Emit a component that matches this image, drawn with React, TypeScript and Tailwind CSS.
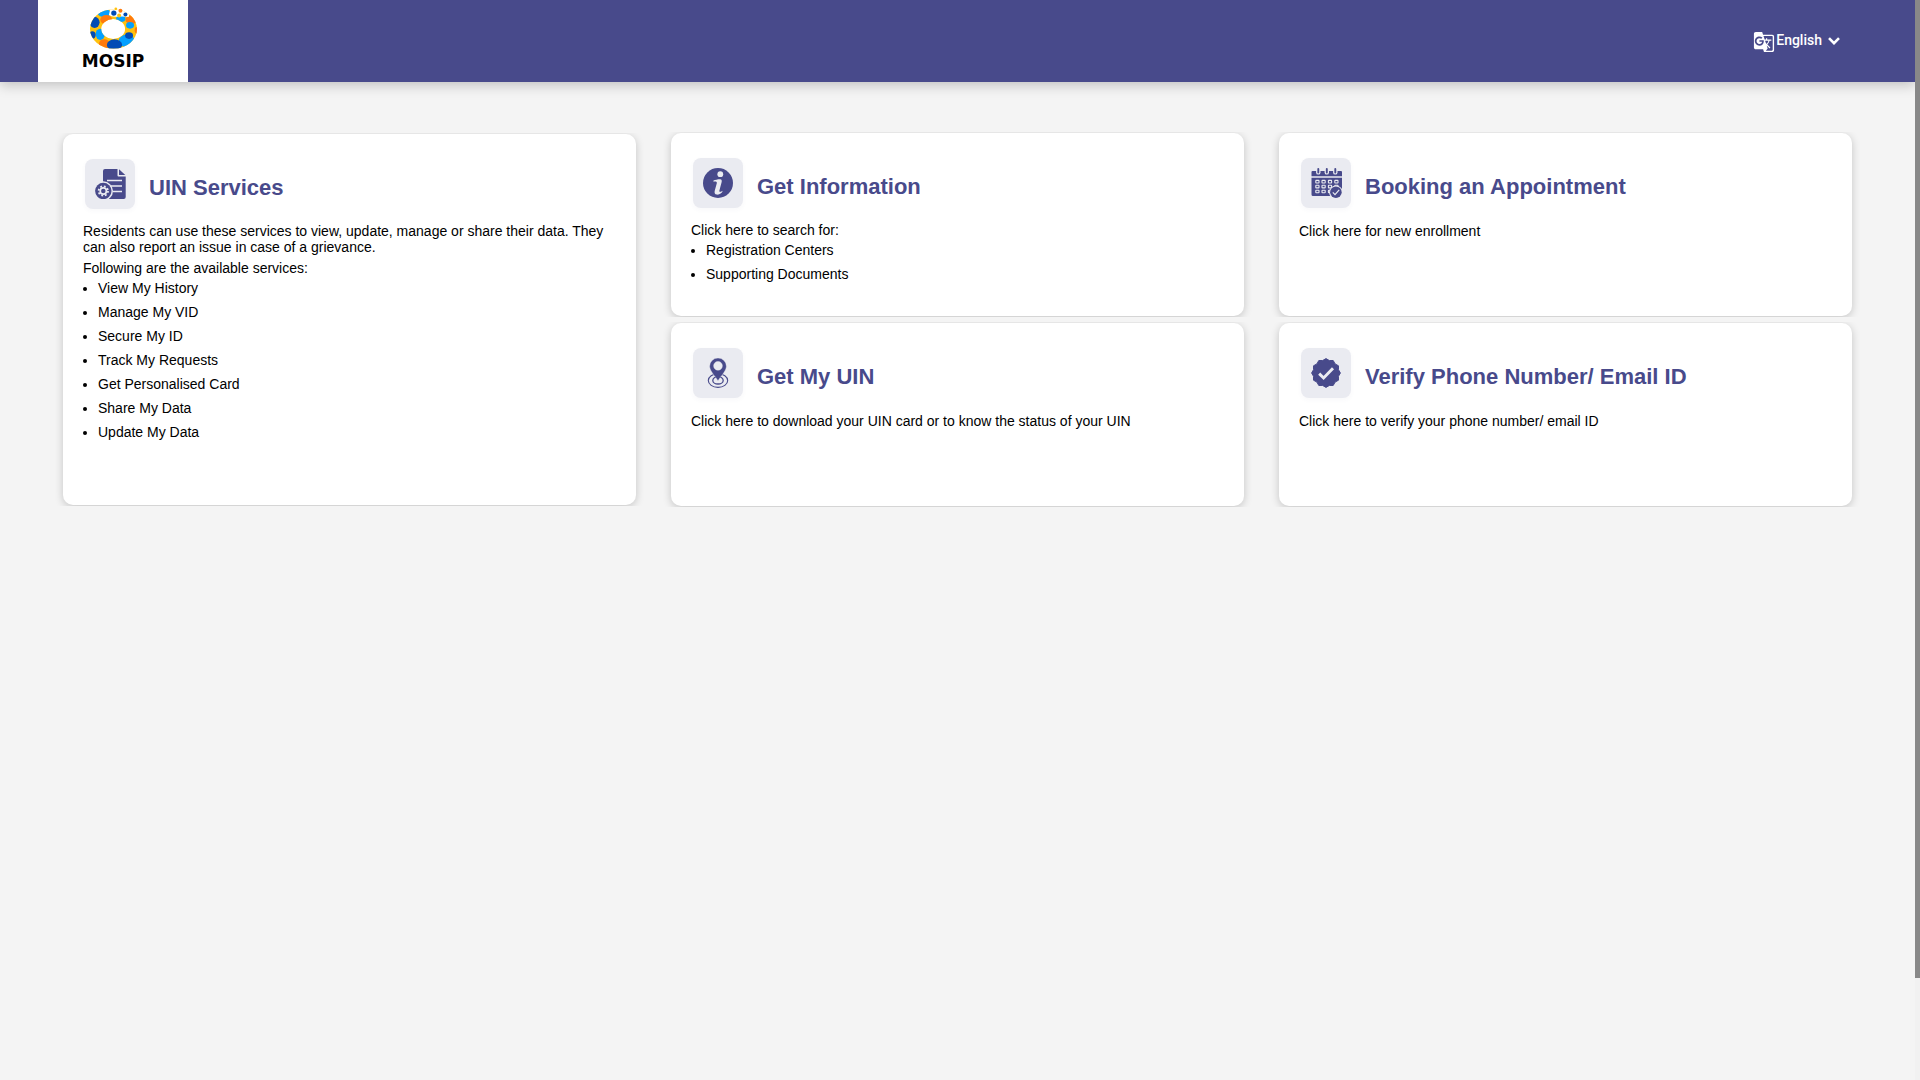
import type { ReactNode } from "react";
import { MdGTranslate } from "react-icons/md";

const PURPLE = "#484a8b";
const TILE = "#eaebf1";

function MosipLogo() {
  return (
    <svg viewBox="179 22 142 126" className="h-[42px] w-[47px]" aria-hidden="true">
      <defs>
        <clipPath id="ring">
          <path
            clipRule="evenodd"
            d="M179 88a71 60 0 1 0 142 0a71 60 0 1 0 -142 0ZM213 88a36 30 0 1 0 72 0a36 30 0 1 0 -72 0Z"
          />
        </clipPath>
      </defs>
      <g clipPath="url(#ring)">
        <rect x="179" y="22" width="142" height="126" fill="#ffc20e" />
        <ellipse cx="222" cy="40" rx="20" ry="12" fill="#04a0ff" />
        <ellipse cx="228" cy="60" rx="18" ry="14" fill="#ff7a0d" />
        <ellipse cx="193" cy="68" rx="15" ry="17" fill="#024bb5" />
        <ellipse cx="210" cy="104" rx="14" ry="17" fill="#04a0ff" />
        <ellipse cx="186" cy="106" rx="10" ry="11" fill="#024bb5" />
        <ellipse cx="222" cy="133" rx="16" ry="14" fill="#ff7a0d" />
        <ellipse cx="290" cy="124" rx="24" ry="19" fill="#04a0ff" />
        <ellipse cx="253" cy="136" rx="23" ry="17" fill="#024bb5" />
        <ellipse cx="304" cy="60" rx="18" ry="13" fill="#ff7a0d" />
        <ellipse cx="300" cy="77" rx="12" ry="10" fill="#04a0ff" />
        <ellipse cx="297" cy="108" rx="12" ry="10" fill="#024bb5" />
        <ellipse cx="321" cy="92" rx="7" ry="10" fill="#ff7a0d" />
        <ellipse cx="272" cy="57" rx="14" ry="10" fill="#04a0ff" />
        <path d="M242 20L236 46Q244 52 258 51L276 50L296 52L300 30Z" fill="#fff" />
      </g>
      <circle cx="251" cy="40" r="8" fill="#024bb5" />
      <circle cx="271" cy="33" r="6" fill="#ff7a0d" />
      <circle cx="257" cy="27" r="4" fill="#ffc20e" />
      <circle cx="286" cy="44" r="6" fill="#024bb5" />
      <circle cx="267" cy="47" r="6" fill="#ffc20e" />
    </svg>
  );
}

function DocumentIcon() {
  return (
    <svg viewBox="0 0 31 30" className="h-[30px] w-[31px]" aria-hidden="true">
      <path d="M8 2a2 2 0 0 1 2-2H22.5V6.5a1 1 0 0 0 1 1H30.7V28a2 2 0 0 1-2 2H8Z" fill={PURPLE} />
      <path d="M24 0.3L30.3 6H24Z" fill={PURPLE} />
      <path d="M12 11.5H27M16 17H27M18 22.5H27" stroke={TILE} strokeWidth="1.3" />
      <circle cx="8.3" cy="22" r="9.7" fill={TILE} />
      <circle cx="8.3" cy="22" r="8.2" fill={PURPLE} />
      <circle cx="8.3" cy="22" r="4.7" fill="none" stroke={TILE} strokeWidth="1.8" strokeDasharray="1.85 1.84" />
      <circle cx="8.3" cy="22" r="3.1" fill="none" stroke={TILE} strokeWidth="1.7" />
    </svg>
  );
}

function InfoIcon() {
  return (
    <svg viewBox="0 0 30 30" className="size-[30px]" aria-hidden="true">
      <circle cx="15" cy="15" r="15" fill={PURPLE} />
      <circle cx="17.3" cy="6.2" r="2.9" fill={TILE} />
      <path
        d="M10.5 12.6C12.6 11.6 15.5 11 17.2 11.2C18.8 11.4 19 12.6 18.6 14.2L16.4 22.6C16 24.4 17.4 24.3 19.8 22.8C18.8 25.6 16 27 13.8 26.6C11.6 26.2 11.2 24.6 11.8 22.4L13.8 15.2C14.2 13.6 12.6 13.3 10.5 13.8Z"
        fill={TILE}
      />
    </svg>
  );
}

const calendarCells = [12.4, 17.3, 22.2].flatMap((y) => [4.8, 11, 17.4, 23.8].map((x) => ({ x, y })));

function CalendarIcon() {
  return (
    <svg viewBox="0 0 31 30" className="h-[30px] w-[31px]" aria-hidden="true">
      <path d="M0.5 8.2V4a1 1 0 0 1 1-1H30a1 1 0 0 1 1 1V8.2ZM0.5 9.8H31V26.4a1.6 1.6 0 0 1-1.6 1.6H2a1.6 1.6 0 0 1-1.5-1.6Z" fill={PURPLE} />
      {[7.3, 15.8, 24.3].map((x) => (
        <g key={x} strokeLinecap="round">
          <path d={`M${x} 2V4.4`} stroke={TILE} strokeWidth="4.4" />
          <path d={`M${x} 1V4.6`} stroke={PURPLE} strokeWidth="1.9" />
        </g>
      ))}
      {calendarCells.map(({ x, y }) => (
        <rect key={`${x}-${y}`} x={x} y={y} width="3.2" height="2.6" rx="0.5" fill={PURPLE} stroke={TILE} strokeWidth="1.1" />
      ))}
      <circle cx="24.9" cy="24.2" r="6.8" fill={TILE} />
      <circle cx="24.9" cy="24.2" r="5.8" fill={PURPLE} />
      <path d="M21.8 24.4L24 26.6L28.2 21.8" fill="none" stroke={TILE} strokeWidth="1.2" />
    </svg>
  );
}

function PinIcon() {
  return (
    <svg viewBox="0 0 30 30" className="size-[30px]" aria-hidden="true">
      <g fill="none" stroke={PURPLE}>
        <ellipse cx="15" cy="22.6" rx="9.7" ry="6.8" strokeWidth="1.1" />
        <ellipse cx="15" cy="22.4" rx="5.2" ry="3.6" strokeWidth="1.3" />
      </g>
      <path
        fillRule="evenodd"
        d="M15 22.8C12.6 18.6 6.6 13 6.6 8.2A8.4 8.2 0 0 1 23.4 8.2C23.4 13 17.4 18.6 15 22.8ZM15 3.4a4.4 4.4 0 1 0 0 8.8a4.4 4.4 0 1 0 0-8.8Z"
        fill={PURPLE}
        stroke={TILE}
        strokeWidth="0.4"
      />
    </svg>
  );
}

/* Twelve-pointed seal built from alternating outer and inner radii. */
const sealPoints = Array.from({ length: 24 }, (_, i) => {
  const r = i % 2 === 0 ? 14.4 : 12.9;
  const a = (i * Math.PI) / 12 - Math.PI / 2;
  return `${(15 + r * Math.cos(a)).toFixed(2)},${(15 + r * Math.sin(a)).toFixed(2)}`;
}).join(" ");

function SealIcon() {
  return (
    <svg viewBox="0 0 30 30" className="size-[30px]" aria-hidden="true">
      <polygon points={sealPoints} fill={PURPLE} stroke={PURPLE} strokeWidth="1" strokeLinejoin="round" />
      <path d="M8.2 15.6L12.6 20L22 10.2" fill="none" stroke={TILE} strokeWidth="2.9" />
    </svg>
  );
}

type CardProps = { title: string; icon: ReactNode; className?: string; children: ReactNode };

function Card({ title, icon, className = "", children }: CardProps) {
  return (
    <a
      href="#"
      className={`block rounded-[10px] bg-white px-5 pt-[25px] pb-4 text-sm leading-4 text-black shadow-[0_2px_9px_rgba(0,0,0,0.2)] [clip-path:inset(-1px_-10px_-1px_-10px)] ${className}`}
    >
      <div className="mb-[14px] flex items-center gap-[14px] pl-0.5">
        <span className="flex size-[50px] shrink-0 items-center justify-center rounded-lg bg-[#eaebf1] shadow-[0_2px_5px_rgba(72,74,139,0.04)]">
          {icon}
        </span>
        <h2 className="pt-[7px] text-[22px] leading-6 font-bold text-[#484a8b]">{title}</h2>
      </div>
      {children}
    </a>
  );
}

function BulletList({ items }: { items: string[] }) {
  return (
    <ul className="mt-1 flex list-disc flex-col gap-2 pl-[15px]">
      {items.map((item) => (
        <li key={item}>{item}</li>
      ))}
    </ul>
  );
}

const services = [
  "View My History",
  "Manage My VID",
  "Secure My ID",
  "Track My Requests",
  "Get Personalised Card",
  "Share My Data",
  "Update My Data",
];

export default function App() {
  return (
    <div className="flex h-screen bg-[#f4f4f4] font-['Liberation_Sans',Arial,sans-serif]">
      <div className="min-w-0 flex-1">
        <header className="flex items-stretch justify-between bg-[#484a8b] pr-[75px] pl-[38px] shadow-[0_3px_12px_rgba(0,0,0,0.22)]">
          <a href="#" className="flex h-[82px] w-[150px] flex-col items-center bg-white pt-[7px]">
            <MosipLogo />
            <span className="mt-[3px] font-['DejaVu_Sans',sans-serif] text-[17px] leading-[18px] font-bold text-black">
              MOSIP
            </span>
          </a>
          <div className="flex items-center text-white">
            <MdGTranslate className="mt-0.5 size-[22px]" aria-hidden="true" />
            <select
              aria-label="Language"
              className="mb-0.5 appearance-none bg-transparent pl-px font-[Roboto,sans-serif] text-sm leading-4 font-medium text-white [field-sizing:content]"
            >
              <option>English</option>
            </select>
            <svg viewBox="0 0 12 8" className="pointer-events-none ml-1.5 h-2 w-3" aria-hidden="true">
              <path d="M1 1.2L6 6.2L11 1.2" fill="none" stroke="#fff" strokeWidth="2.6" />
            </svg>
          </div>
        </header>

        <main className="grid grid-cols-3 gap-x-[35px] gap-y-[7px] px-[63px] pt-[51px]">
          <Card title="UIN Services" icon={<DocumentIcon />} className="row-span-2 my-px">
            <p>
              Residents can use these services to view, update, manage or share their data. They can also report an
              issue in case of a grievance.
            </p>
            <p className="mt-[5px]">Following are the available services:</p>
            <BulletList items={services} />
          </Card>
          <Card title="Get Information" icon={<InfoIcon />} className="min-h-[183px]">
            <p>Click here to search for:</p>
            <BulletList items={["Registration Centers", "Supporting Documents"]} />
          </Card>
          <Card title="Booking an Appointment" icon={<CalendarIcon />} className="min-h-[183px]">
            <p className="pt-px">Click here for new enrollment</p>
          </Card>
          <Card title="Get My UIN" icon={<PinIcon />} className="min-h-[183px]">
            <p className="pt-px">Click here to download your UIN card or to know the status of your UIN</p>
          </Card>
          <Card title="Verify Phone Number/ Email ID" icon={<SealIcon />} className="min-h-[183px]">
            <p className="pt-px">Click here to verify your phone number/ email ID</p>
          </Card>
        </main>
      </div>
      <div className="w-[5px] bg-[#f1f1f1]" aria-hidden="true">
        <div className="h-[90.6%] bg-[#888888]" />
      </div>
    </div>
  );
}
